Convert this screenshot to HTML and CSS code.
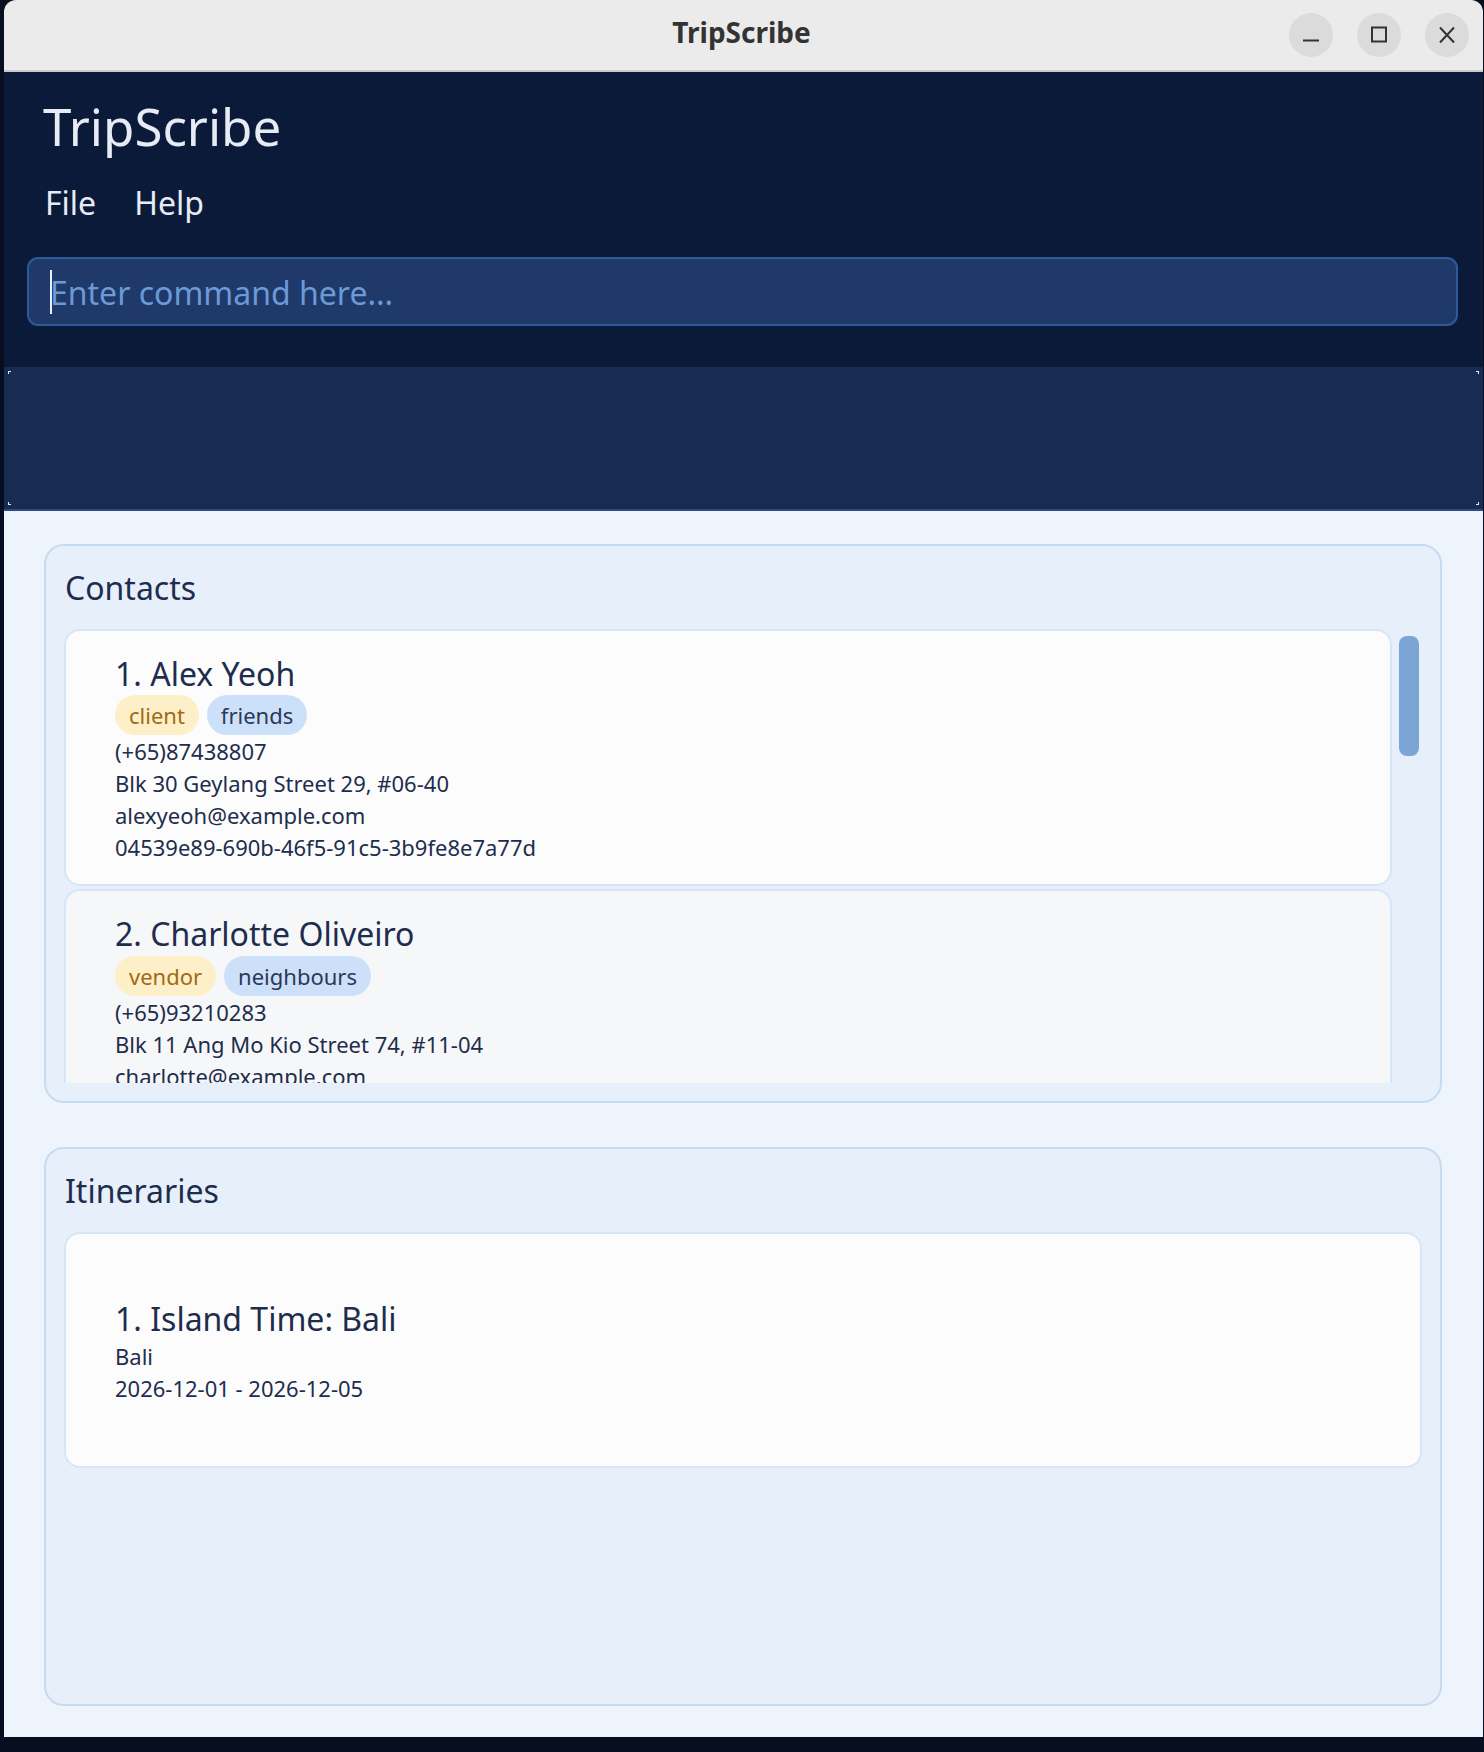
FILE: index.html
```html
<!DOCTYPE html>
<html lang="en">
<head>
<meta charset="utf-8">
<title>TripScribe</title>
<link rel="stylesheet" href="styles.css">
</head>
<body>
<div class="window">
  <div class="titlebar">
    <div class="tb-spacer"></div>
    <div class="tb-title">TripScribe</div>
    <div class="tb-buttons">
      <span class="tb-btn"><svg width="18" height="18" viewBox="0 0 18 18"><path d="M1 14.5h16" stroke="#333" stroke-width="1.8" fill="none"/></svg></span>
      <span class="tb-btn"><svg width="18" height="18" viewBox="0 0 18 18"><rect x="2" y="1.5" width="14" height="14" stroke="#333" stroke-width="2" fill="none"/></svg></span>
      <span class="tb-btn"><svg width="18" height="18" viewBox="0 0 18 18"><path d="M2 1.5l14 15M16 1.5l-14 15" stroke="#333" stroke-width="2" fill="none"/></svg></span>
    </div>
  </div>

  <header class="header">
    <div class="app-title">TripScribe</div>
    <nav class="menu">
      <span class="menu-item">File</span>
      <span class="menu-item">Help</span>
    </nav>
    <div class="command">
      <span class="caret"></span><span class="placeholder">Enter command here...</span>
    </div>
  </header>

  <div class="result">
    <span class="mark mark-tl"></span>
    <span class="mark mark-tr"></span>
    <span class="mark mark-bl"></span>
    <span class="mark mark-br"></span>
  </div>

  <main class="main">
    <section class="panel">
      <h2 class="panel-title">Contacts</h2>
      <div class="list-wrap">
        <div class="list">
          <div class="card">
            <div class="card-name">1. Alex Yeoh</div>
            <div class="tags">
              <span class="tag tag-role">client</span>
              <span class="tag tag-group">friends</span>
            </div>
            <div class="detail">(+65)87438807</div>
            <div class="detail">Blk 30 Geylang Street 29, #06-40</div>
            <div class="detail">alexyeoh@example.com</div>
            <div class="detail">04539e89-690b-46f5-91c5-3b9fe8e7a77d</div>
          </div>
          <div class="card card-alt">
            <div class="card-name">2. Charlotte Oliveiro</div>
            <div class="tags">
              <span class="tag tag-role">vendor</span>
              <span class="tag tag-group">neighbours</span>
            </div>
            <div class="detail">(+65)93210283</div>
            <div class="detail">Blk 11 Ang Mo Kio Street 74, #11-04</div>
            <div class="detail">charlotte@example.com</div>
            <div class="detail">a1f3c2d4-7b8e-4c9a-b1d2-3e4f5a6b7c8d</div>
          </div>
        </div>
        <div class="scrolltrack"><div class="thumb"></div></div>
      </div>
    </section>

    <section class="panel">
      <h2 class="panel-title">Itineraries</h2>
      <div class="list">
        <div class="card card-trip">
          <div class="card-name">1. Island Time: Bali</div>
          <div class="detail">Bali</div>
          <div class="detail">2026-12-01 - 2026-12-05</div>
        </div>
      </div>
    </section>
  </main>
</div>
</body>
</html>
```

FILE: styles.css
```css
* { box-sizing: border-box; }

html, body {
  margin: 0;
  padding: 0;
}

body {
  width: 1484px;
  height: 1752px;
  background: #070e1f;
  font-family: "Noto Sans", "Open Sans", sans-serif;
  overflow: hidden;
}

.window {
  margin-left: 4px;
  width: 1479px;
  height: 1737px;
  border-radius: 12px 12px 0 0;
  overflow: hidden;
  display: flex;
  flex-direction: column;
}

/* title bar */
.titlebar {
  height: 72px;
  flex: none;
  background: #ebebeb;
  border-bottom: 2px solid #cacaca;
  display: grid;
  grid-template-columns: 1fr auto 1fr;
  align-items: center;
}

.tb-title {
  font-family: "Noto Sans", sans-serif;
  font-weight: 700;
  font-size: 28px;
  line-height: 38px;
  color: #333333;
  margin-left: -4px;
  margin-bottom: 6px;
}

.tb-buttons {
  display: flex;
  justify-content: flex-end;
  gap: 24px;
  padding-right: 14px;
}

.tb-btn {
  width: 44px;
  height: 44px;
  border-radius: 50%;
  background: #dbdbdb;
  display: flex;
  align-items: center;
  justify-content: center;
}

/* header */
.header {
  flex: none;
  background: #0c1a3a;
  padding: 20px 25px 41px 23px;
  color: #e6ebf4;
}

.app-title {
  font-size: 51px;
  line-height: 69.5px;
  padding-left: 16px;
}

.menu {
  margin-top: 19px;
  display: flex;
  gap: 38px;
  padding-left: 18px;
  font-size: 32px;
  line-height: 43.6px;
}

.command {
  margin-top: 33px;
  height: 69px;
  border: 2px solid #2e5a9c;
  border-radius: 11px;
  background: #1e396a;
  display: flex;
  align-items: center;
  padding-left: 21px;
}

.caret {
  width: 2px;
  height: 44px;
  background: #e8eefa;
  margin-right: -2px;
}

.placeholder {
  font-size: 32px;
  line-height: 43.6px;
  color: #6c9ad6;
  margin-top: 2px;
}

/* result display */
.result {
  flex: none;
  position: relative;
  height: 144px;
  background: #182b53;
  border-bottom: 2px solid #2b4b85;
}

.mark {
  position: absolute;
  width: 3px;
  height: 3px;
  border-color: #e6ebf4;
  border-style: solid;
  border-width: 0;
}
.mark-tl { top: 4px; left: 4px; border-top-width: 1px; border-left-width: 1px; }
.mark-tr { top: 4px; right: 4px; border-top-width: 1px; border-right-width: 1px; }
.mark-bl { bottom: 4px; left: 4px; border-bottom-width: 1px; border-left-width: 1px; }
.mark-br { bottom: 4px; right: 4px; border-bottom-width: 1px; border-right-width: 1px; }

/* main */
.main {
  flex: 1;
  min-height: 0;
  background: #eef4fc;
  padding: 33px 41px 31px 40px;
  display: flex;
  flex-direction: column;
  gap: 44px;
}

.panel {
  flex: 1;
  min-height: 0;
  background: #e7f0fa;
  border: 2px solid #c6daf0;
  border-radius: 20px;
  padding: 20px 18px 18px 18px;
  display: flex;
  flex-direction: column;
  color: #1f2d4d;
}

.panel-title {
  margin: 0 0 19px 0;
  padding-left: 1px;
  font-size: 32px;
  font-weight: 400;
  line-height: 43.6px;
}

.list-wrap {
  flex: 1;
  min-height: 0;
  display: flex;
}

.list {
  flex: 1;
  min-height: 0;
  overflow: hidden;
  display: flex;
  flex-direction: column;
  gap: 3px;
}

.scrolltrack {
  flex: none;
  width: 30px;
  padding: 7px 3px 0 7px;
}

.thumb {
  width: 20px;
  height: 120px;
  border-radius: 8px;
  background: #7ba5d5;
}

.card {
  flex: none;
  background: #fcfcfd;
  border: 2px solid #d6e6f6;
  border-radius: 16px;
  padding: 21px 0 21px 49px;
}

.card-alt {
  background: #f6f7f8;
}

.card-trip {
  padding-top: 63px;
  padding-bottom: 62px;
}

.card-name {
  font-size: 32px;
  line-height: 43.6px;
  color: #1f2d4d;
}

.tags {
  display: flex;
  gap: 8px;
  height: 40px;
}

.tag {
  height: 40px;
  line-height: 40px;
  border-radius: 20px;
  padding: 0 14px;
  font-size: 22px;
}

.tag-role {
  background: #fdf0c8;
  color: #a26a15;
}

.tag-group {
  background: #cde0fa;
  color: #2b3858;
}

.detail {
  font-size: 22px;
  line-height: 32px;
  color: #1f2d4d;
}
```
